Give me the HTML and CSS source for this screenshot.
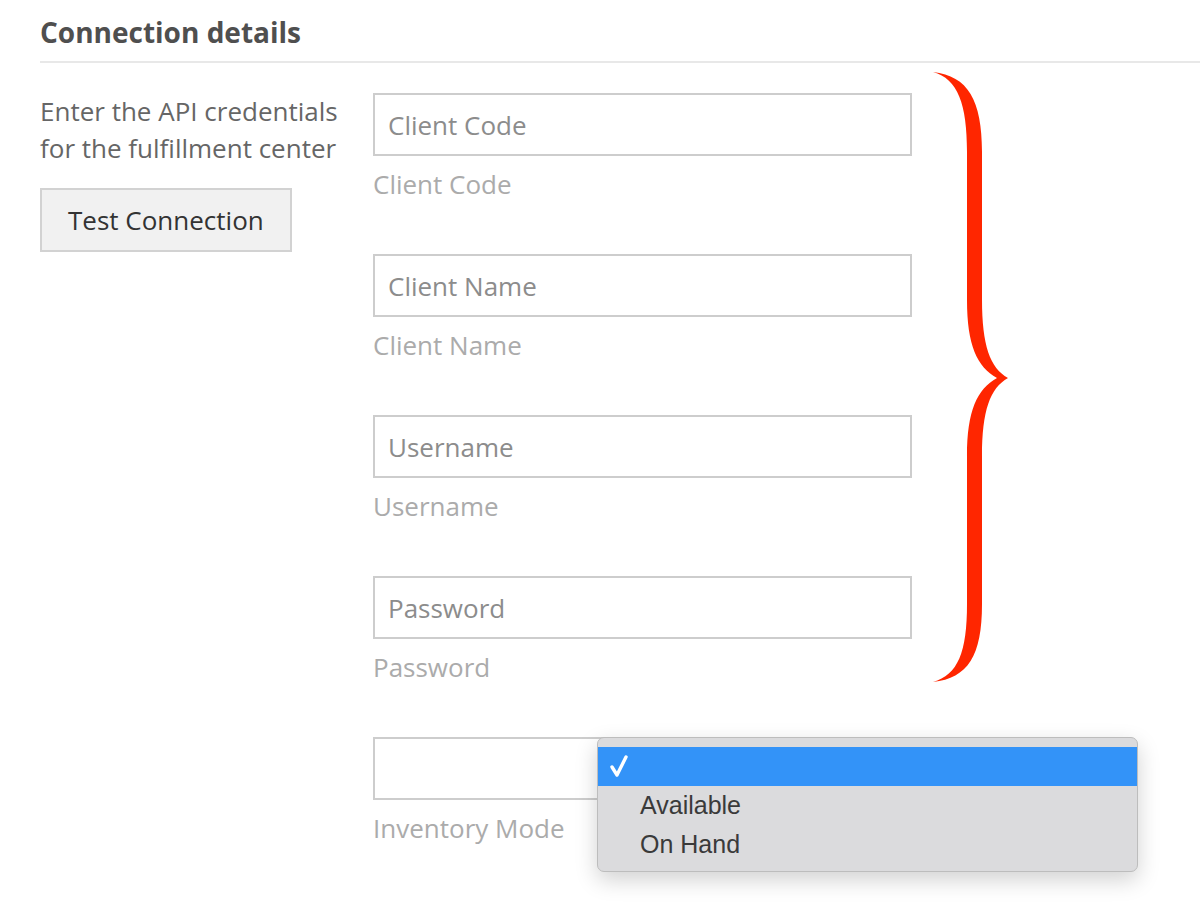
FILE: index.html
```html
<!DOCTYPE html>
<html lang="en">
<head>
    <meta charset="UTF-8">
    <title>Connection details</title>
    <link rel="stylesheet" href="styles.css">
</head>
<body>
    <div class="page">
        <h2 class="section-title">Connection details</h2>

        <div class="section-body">
            <div class="intro">
                <p>Enter the API credentials for the fulfillment center</p>
                <button type="button" class="btn">Test Connection</button>
            </div>

            <div class="fields">
                <div class="field">
                    <input type="text" id="clientCode" placeholder="Client Code">
                    <label for="clientCode">Client Code</label>
                </div>
                <div class="field">
                    <input type="text" id="clientName" placeholder="Client Name">
                    <label for="clientName">Client Name</label>
                </div>
                <div class="field">
                    <input type="text" id="username" placeholder="Username">
                    <label for="username">Username</label>
                </div>
                <div class="field">
                    <input type="password" id="password" placeholder="Password">
                    <label for="password">Password</label>
                </div>
                <div class="field select-field">
                    <div class="select-box"></div>
                    <label>Inventory Mode</label>
                    <ul class="select-menu">
                        <li class="selected">
                            <svg class="check" viewBox="0 0 18 22" width="18" height="22">
                                <path d="M2 12 L7 20 L16 2" fill="none" stroke="#fff" stroke-width="3.4" stroke-linecap="round" stroke-linejoin="round"/>
                            </svg>
                        </li>
                        <li>Available</li>
                        <li>On Hand</li>
                    </ul>
                </div>
            </div>
        </div>

        <!-- annotation brace over the credential inputs -->
        <svg class="brace" viewBox="925 65 90 625" width="90" height="625">
            <path fill="#ff2600" d="M933 72 C968 76 982 100 982 152 L982 300 C982 345 990 368 1008 378 C990 388 982 411 982 456 L982 604 C982 656 968 678 933 682 C958 675 967 652 967 604 L967 456 C967 411 977 389 997 378 C977 367 967 345 967 300 L967 152 C967 104 958 79 933 72 Z"/>
        </svg>
    </div>
</body>
</html>
```

FILE: styles.css
```css
body {
    margin: 0;
    font-family: "Open Sans", Arial, sans-serif;
    background-color: #fff;
}
.page {
    position: relative;
    padding-left: 40px;
    height: 910px;
    overflow: hidden;
}
.section-title {
    margin: 0;
    padding: 14px 0 11px;
    font-size: 28px;
    line-height: 36px;
    font-weight: 700;
    color: #4f4f4f;
    border-bottom: 2px solid #e8e8e8;
}
.section-body {
    display: flex;
    gap: 33px;
    padding-top: 30px;
}
.intro {
    width: 300px;
}
.intro p {
    margin: 0;
    font-size: 26px;
    line-height: 37px;
    color: #666;
}
.btn {
    margin-top: 21px;
    height: 64px;
    padding: 0 26px;
    font-family: "Open Sans", Arial, sans-serif;
    font-size: 26px;
    color: #333;
    background-color: #f1f1f1;
    border: 2px solid #d2d2d2;
    border-radius: 0;
}
.fields {
    width: 539px;
}
.field {
    margin-bottom: 53px;
}
.field input,
.select-box {
    display: block;
    box-sizing: border-box;
    width: 539px;
    height: 63px;
    padding: 0 13px;
    font-family: "Open Sans", Arial, sans-serif;
    font-size: 26px;
    color: #333;
    border: 2px solid #cdcdcd;
    border-radius: 0;
    outline: none;
}
.field input::placeholder {
    color: #8c8c8c;
}
.field label {
    display: block;
    margin-top: 11px;
    font-size: 26px;
    line-height: 34px;
    color: #ababab;
}
.select-field {
    position: relative;
}
.select-menu {
    position: absolute;
    left: 224px;
    top: 0;
    width: 541px;
    margin: 0;
    padding: 9px 0 7px;
    list-style: none;
    box-sizing: border-box;
    background-color: #dbdbdd;
    border: 1px solid #bdbdbd;
    border-radius: 7px;
    box-shadow: 0 8px 22px rgba(0,0,0,0.18);
    font-family: "Liberation Sans", Arial, sans-serif;
    font-size: 25px;
    color: #3a3a3a;
}
.select-menu li {
    height: 39px;
    line-height: 39px;
    padding-left: 42px;
}
.select-menu li.selected {
    position: relative;
    background-color: #3393f8;
}
.check {
    position: absolute;
    left: 12px;
    top: 8px;
}
.brace {
    position: absolute;
    left: 925px;
    top: 65px;
}
```
